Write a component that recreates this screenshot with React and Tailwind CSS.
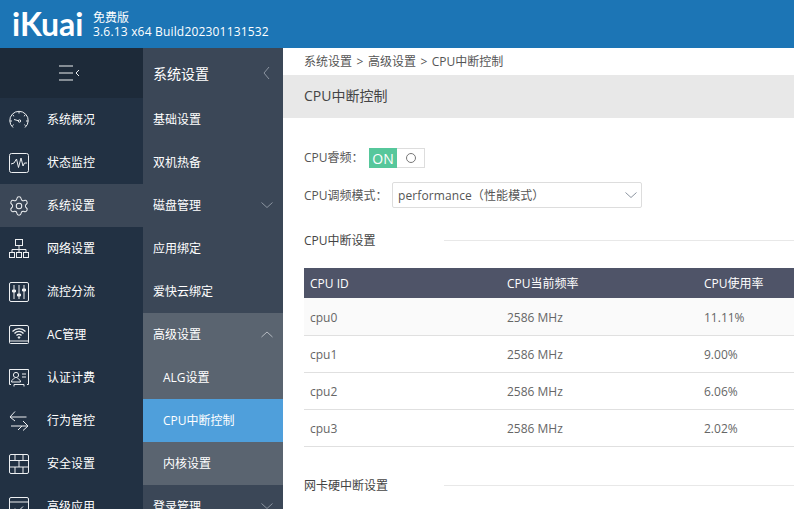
import { Settings } from 'lucide-react';

const ICON = { width: 20, height: 20, viewBox: '0 0 20 20', fill: 'none', stroke: '#eef0f2', strokeWidth: 1 };

function Gauge() {
    return (
        <svg {...ICON}>
            <path d="M4 17.5A9.2 9.2 0 1 1 16 17.5" />
            <path d="M1 11h2M17 11h2M3.700 5l1.400 1.200M16.300 5l-1.400 1.200M10 2v1.500M3.500 15.500l1.200-.8M16.500 15.500l-1.200-.8" />
            <circle cx="10.500" cy="11" r="1.200" />
            <path d="M5 9.500l4.300 1.200" />
        </svg>
    );
}

function Pulse() {
    return (
        <svg {...ICON}>
            <rect x="0.5" y="0.5" width="19" height="19" rx="2" />
            <path d="M2 11l3-1 2.500-4 2 8.500 2.500-9.500 2 8 1.500-3H18" />
        </svg>
    );
}

function Net() {
    return (
        <svg {...ICON}>
            <rect x="6.500" y="0.5" width="7" height="6" />
            <rect x="0.5" y="13.500" width="5" height="5" />
            <rect x="7.500" y="13.500" width="5" height="5" />
            <rect x="14.500" y="13.500" width="5" height="5" />
            <path d="M10 6.500v7M3 13.500v-3h14v3" />
        </svg>
    );
}

function Sliders() {
    return (
        <svg {...ICON}>
            <rect x="0.5" y="0.5" width="19" height="19" rx="1.500" />
            <path d="M5 3v14M10 3v14M15 3v14" />
            <path d="M3.500 8h3v2h-3zM8.500 12h3v2h-3zM13.500 7h3v2h-3z" fill="#eef0f2" />
        </svg>
    );
}

function Wifi() {
    return (
        <svg {...ICON}>
            <path d="M.5 16V2A1.500 1.500 0 0 1 2 .5h16A1.500 1.500 0 0 1 19.500 2v14zM.5 16v1.500a1 1 0 0 0 1 1h17a1 1 0 0 0 1-1V16" />
            <path d="M3.500 6.500a9 9 0 0 1 13 0M5.500 8.500a6 6 0 0 1 9 0M7.500 10.500a3.200 3.200 0 0 1 5 0" strokeWidth="1.300" />
            <circle cx="10" cy="12.500" r="0.8" fill="#eef0f2" />
        </svg>
    );
}

function Card() {
    return (
        <svg {...ICON}>
            <path d="M2 16.500H.5V1.500h19v15H18M5 16.500h10" />
            <circle cx="7" cy="7" r="2.600" />
            <path d="M2.500 14c0-2 1.500-3 3-3.500M11.500 14c0-2-1.500-3-3-3.500M2.500 14h9" />
            <path d="M13 6h4M13 9h4" />
            <path d="M5 16.500v2M15 16.500v2" />
        </svg>
    );
}

function Arrows() {
    return (
        <svg {...ICON}>
            <path d="M6 .5L1 6l5 4M1 6h16.500" />
            <path d="M14 10l5 5-5 4.500M19 15H2" />
            <path d="M9 19l4-4" />
        </svg>
    );
}

function Wall() {
    return (
        <svg {...ICON}>
            <rect x="0.5" y="0.5" width="19" height="19" rx="1.500" />
            <path d="M.5 6.500h19M.5 13h19M6 .5v6M14 .5v6M10 6.500V13M6 13v6.500M14 13v6.500" />
        </svg>
    );
}

function Check() {
    return (
        <svg {...ICON}>
            <rect x="0.5" y="0.5" width="19" height="19" rx="1.500" />
            <path d="M.5 5h19M6 11.500l3 3 5-5" />
        </svg>
    );
}

function Gear() {
    return <Settings size={22} strokeWidth={1.1} color="#eef0f2" className="-mx-px" />;
}

const mainNav = [
    { label: '系统概况', Icon: Gauge },
    { label: '状态监控', Icon: Pulse },
    { label: '系统设置', Icon: Gear, active: true },
    { label: '网络设置', Icon: Net },
    { label: '流控分流', Icon: Sliders },
    { label: 'AC管理', Icon: Wifi },
    { label: '认证计费', Icon: Card },
    { label: '行为管控', Icon: Arrows },
    { label: '安全设置', Icon: Wall },
    { label: '高级应用', Icon: Check },
];

const rows = [
    { id: 'cpu0', freq: '2586 MHz', usage: '11.11%' },
    { id: 'cpu1', freq: '2586 MHz', usage: '9.00%' },
    { id: 'cpu2', freq: '2586 MHz', usage: '6.06%' },
    { id: 'cpu3', freq: '2586 MHz', usage: '2.02%' },
];

function Chevron({ up, left, color = '#8b94a0' }) {
    let d = 'M.5 .5l5.500 5 5.500-5';
    if (up) d = 'M.5 6l5.500-5 5.500 5';
    if (left) d = 'M6 1L1 7l5 6';
    return (
        <svg width={left ? 7 : 12} height={left ? 14 : 7} viewBox={left ? '0 0 7 14' : '0 0 12 7'} fill="none" stroke={color} strokeWidth="1">
            <path d={d} />
        </svg>
    );
}

function SubItem({ label, chevron, className = '' }) {
    return (
        <div className={`h-[43px] flex items-center justify-between pl-[10px] pr-[10px] text-white ${className}`}>
            <span>{label}</span>
            {chevron}
        </div>
    );
}

function SectionTitle({ label }) {
    return (
        <div className="flex items-center h-4 text-[12px] text-[#444]">
            <span className="w-[140px] shrink-0 pt-[2px]">{label}</span>
            <div className="flex-1 h-px bg-[#e8e8e8]" />
        </div>
    );
}

export default function App() {
    return (
        <div
            className="w-[794px] h-[509px] overflow-hidden bg-white text-[12px] flex flex-col"
            style={{ fontFamily: '"Open Sans", "Noto Sans CJK SC", sans-serif' }}
        >
            <header className="h-[48px] shrink-0 bg-[#1c75b5] flex items-center text-white">
                <div className="w-[93px] pl-[12px] text-[32px] font-bold leading-none" style={{ fontFamily: '"Lato", sans-serif' }}>
                    iKuai
                </div>
                <div className="text-[12px] pt-[2px]">
                    <div className="leading-[14px]">免费版</div>
                    <div className="leading-[14px] tracking-[0.18px]">3.6.13 x64 Build202301131532</div>
                </div>
            </header>
            <div className="flex flex-1 min-h-0">
                <nav className="w-[143px] shrink-0 bg-[#223143] text-white">
                    <div className="h-[50px] bg-[#1d2a39] flex items-center justify-center pr-[4px]">
                        <svg width="22" height="16" viewBox="0 0 22 16" fill="none" stroke="#eef0f2" strokeWidth="1">
                            <path d="M0 1h14M0 8h14M0 15h14" />
                            <path d="M20 5l-3 3 3 3" />
                        </svg>
                    </div>
                    {mainNav.map(({ label, Icon, active }) => (
                        <div key={label} className={`h-[43px] flex items-center pl-[9px] ${active ? 'bg-[#3b4757]' : ''}`}>
                            <span className="w-[38px] shrink-0">
                                <Icon />
                            </span>
                            <span>{label}</span>
                        </div>
                    ))}
                </nav>
                <aside className="w-[140px] shrink-0 bg-[#3b4757]">
                    <div className="h-[50px] flex items-center justify-between pl-[10px] pr-[13px] text-[14px] text-white">
                        <span>系统设置</span>
                        <Chevron left />
                    </div>
                    <SubItem label="基础设置" />
                    <SubItem label="双机热备" />
                    <SubItem label="磁盘管理" chevron={<Chevron />} />
                    <SubItem label="应用绑定" />
                    <SubItem label="爱快云绑定" />
                    <div className="bg-[#5a6470]">
                        <SubItem label="高级设置" chevron={<Chevron up color="#b4b9c0" />} />
                        <SubItem label="ALG设置" className="pl-[20px]" />
                        <SubItem label="CPU中断控制" className="pl-[20px] bg-[#4f9fdb]" />
                        <SubItem label="内核设置" className="pl-[20px]" />
                    </div>
                    <SubItem label="登录管理" chevron={<Chevron />} />
                </aside>
                <main className="flex-1 min-w-0 text-[#666]">
                    <div className="h-[27px] flex items-center gap-[4.5px] pl-[21px] text-[#555]">
                        <span>系统设置</span>
                        <span>&gt;</span>
                        <span>高级设置</span>
                        <span>&gt;</span>
                        <span>CPU中断控制</span>
                    </div>
                    <div className="h-[43px] bg-[#e8e8e8] flex items-center pl-[21px] pb-[2px] text-[14px] text-[#444]">CPU中断控制</div>
                    <div className="pl-[21px]">
                        <div className="mt-[30px] h-5 flex items-center text-[#555]">
                            <span className="w-[65px]">CPU睿频：</span>
                            <div className="flex w-[56px] h-5 border border-[#ddd]">
                                <span className="-my-px -ml-px w-[28px] bg-[#56c79b] text-white text-[14px] flex items-center justify-center">ON</span>
                                <span className="flex-1 flex items-center justify-center">
                                    <span className="size-[10px] rounded-full border border-[#777]" />
                                </span>
                            </div>
                        </div>
                        <div className="mt-[14px] flex items-center text-[#555]">
                            <span className="w-[88px] pt-[2px]">CPU调频模式：</span>
                            <div className="w-[250px] h-[26px] border border-[#ddd] rounded-[2px] flex items-center justify-between pl-[5px] pr-[4px]">
                                <span className="pt-[2px] tracking-[0.1px]">performance（性能模式）</span>
                                <Chevron />
                            </div>
                        </div>
                        <div className="mt-[24px]">
                            <SectionTitle label="CPU中断设置" />
                        </div>
                        <div className="mt-[20px]">
                            <div className="h-[30px] pt-[2px] bg-[#4f5468] text-white grid grid-cols-[197px_197px_1fr] items-center pl-[6px]">
                                <span>CPU ID</span>
                                <span>CPU当前频率</span>
                                <span>CPU使用率</span>
                            </div>
                            {rows.map((row, i) => (
                                <div
                                    key={row.id}
                                    className={`${i === 0 ? 'h-[38px] bg-[#fafafa]' : 'h-[37px]'} pt-[2px] border-b border-[#e0e0e0] grid grid-cols-[197px_197px_1fr] items-center pl-[6px]`}
                                >
                                    <span>{row.id}</span>
                                    <span>{row.freq}</span>
                                    <span>{row.usage}</span>
                                </div>
                            ))}
                        </div>
                        <div className="mt-[30px]">
                            <SectionTitle label="网卡硬中断设置" />
                        </div>
                    </div>
                </main>
            </div>
        </div>
    );
}
